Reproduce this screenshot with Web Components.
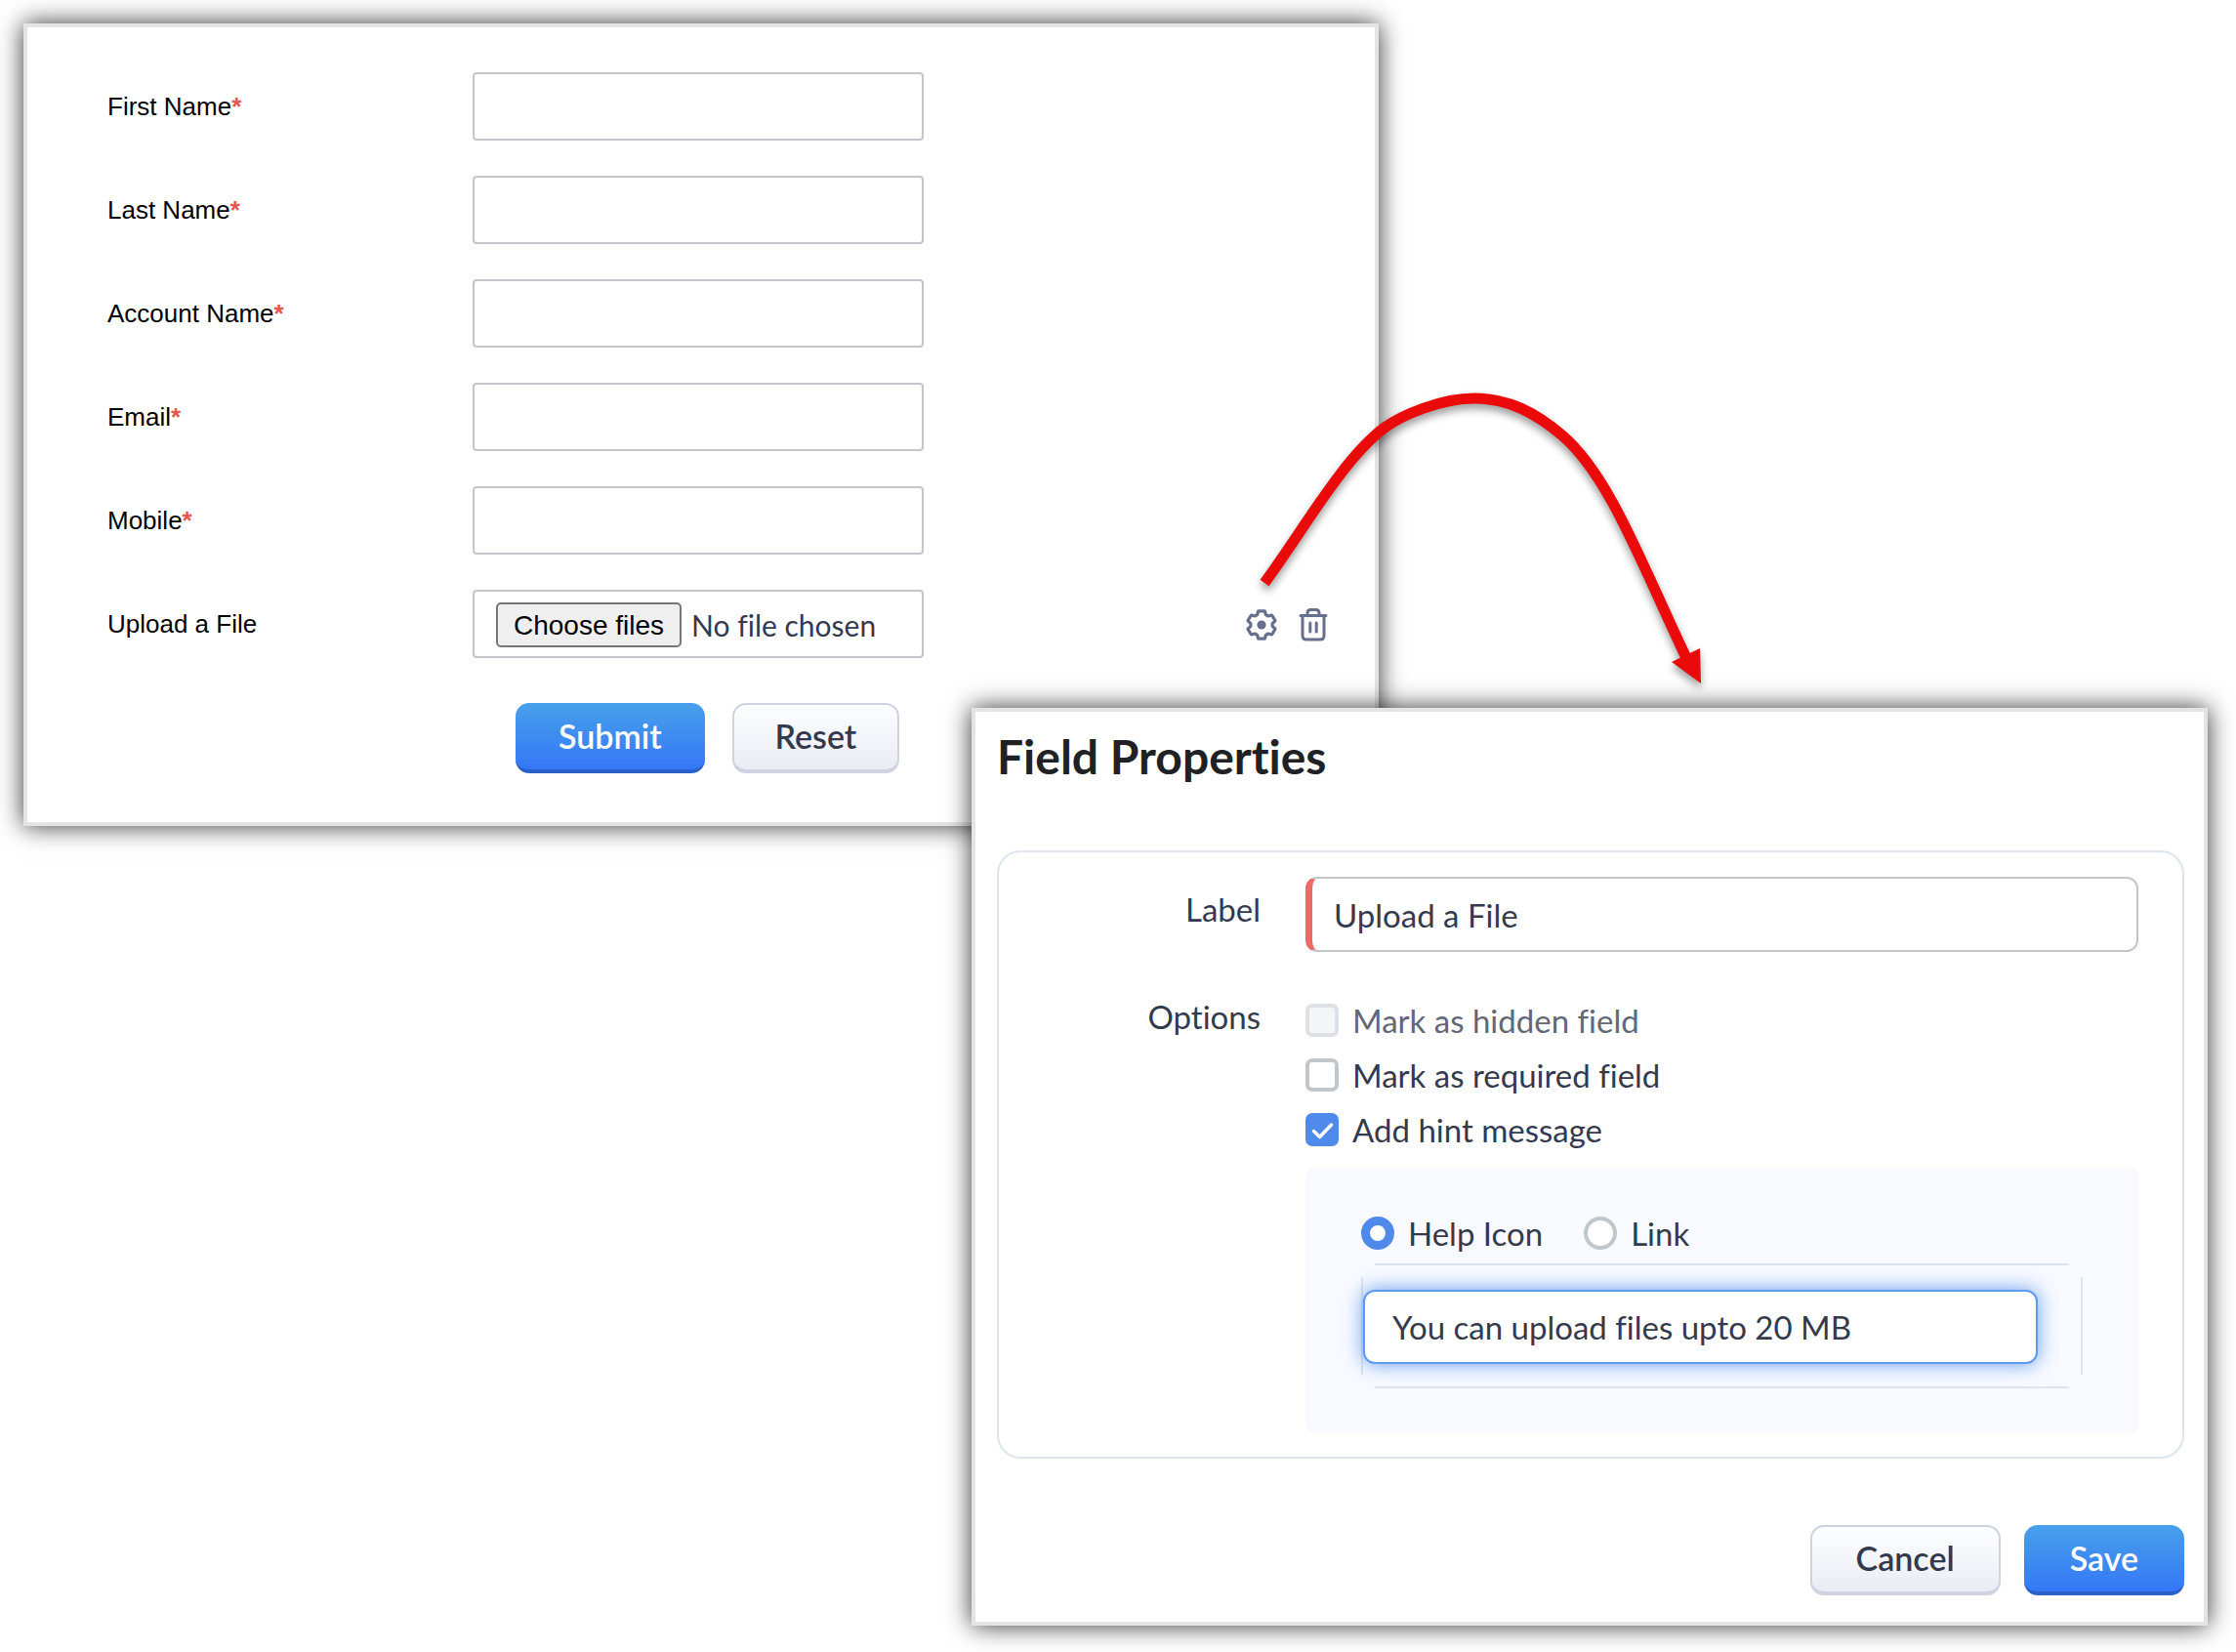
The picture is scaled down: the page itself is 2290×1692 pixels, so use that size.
<!DOCTYPE html>
<html lang="en">
<head>
<meta charset="utf-8">
<meta name="viewport" content="width=device-width, initial-scale=1">
<title>Field Properties</title>
<style>
  body {
    margin: 0;
    background: #fff;
    color: #343a4d;
    font-family: Lato, "Open Sans", sans-serif;
    font-size: 33px;
    font-variant-ligatures: none;
  }
</style>
</head>
<body>
<app-stage>
  <app-panel slot="form">
    <web-form></web-form>
  </app-panel>
  <app-panel slot="properties">
    <field-properties></field-properties>
  </app-panel>
  <callout-arrow slot="arrow"></callout-arrow>
</app-stage>

<script>
class BaseElement extends HTMLElement {
  constructor() {
    super();
    this.attachShadow({ mode: 'open' });
  }

  connectedCallback() {
    this.render();
  }
}

// Two overlapping windows, the second one on top of the first
class AppStage extends BaseElement {
  render() {
    this.shadowRoot.innerHTML = `
      <style>
        :host {
          display: grid;
          position: relative;
          grid-template-columns: 971fr 417fr 849fr;
          grid-template-rows: 701px auto;
          padding: 24px 29px 28px 24px;
        }
        slot[name="form"]::slotted(*) {
          grid-area: 1 / 1 / 3 / 3;
          align-self: start;
        }
        slot[name="properties"]::slotted(*) {
          grid-area: 2 / 2 / 3 / 4;
        }
        slot[name="arrow"]::slotted(*) {
          position: absolute;
          left: 1280px;
          top: 390px;
        }
      </style>
      <slot name="form"></slot>
      <slot name="properties"></slot>
      <slot name="arrow"></slot>
    `;
  }
}

class AppPanel extends BaseElement {
  render() {
    this.shadowRoot.innerHTML = `
      <style>
        :host {
          display: block;
          min-width: 0;
          border: 4px solid #e4e4e4;
          background: #fff;
          box-shadow: 0 0 24px rgba(0, 0, 0, 0.8);
        }
      </style>
      <slot></slot>
    `;
  }
}

class CalloutArrow extends BaseElement {
  render() {
    this.shadowRoot.innerHTML = `
      <style>
        :host {
          display: block;
          pointer-events: none;
        }
        svg {
          display: block;
          filter: drop-shadow(0 5px 4px rgba(0, 0, 0, 0.4));
        }
      </style>
      <svg width="480" height="330" viewBox="1280 390 480 330" aria-hidden="true">
        <path d="M1295 597C1335 543 1375 470 1418 438C1436 425 1476 408 1510 408C1545 408 1573 423 1600 446C1648 487 1680 575 1728 676" fill="none" stroke="#ea0a0a" stroke-width="11"/>
        <path d="M1742 700L1712 678L1741 664Z" fill="#ea0a0a"/>
      </svg>
    `;
  }
}

class AppButton extends BaseElement {
  render() {
    const variant = this.getAttribute('variant') || 'default';
    this.shadowRoot.innerHTML = `
      <style>
        :host {
          display: block;
        }
        button {
          display: block;
          height: 72px;
          padding: 0 calc(var(--button-padding, 44px) - 2px) 2px;
          border: 2px solid #d0d3df;
          border-bottom-width: 4px;
          border-radius: 14px;
          background: linear-gradient(#fdfeff, #e9ecf3);
          color: #343a4d;
          font: 600 34px/1 Lato, "Open Sans", sans-serif;
          cursor: pointer;
        }
        .primary {
          border-width: 0 0 4px;
          border-color: #2a60c8;
          padding: 0 var(--button-padding, 44px);
          background: linear-gradient(#48a0ea, #3577f7);
          color: #fff;
        }
      </style>
      <button type="button" class="${variant}"><slot></slot></button>
    `;
  }
}

class FormField extends BaseElement {
  render() {
    const label = this.getAttribute('label');
    const required = this.hasAttribute('required');
    const isFile = this.getAttribute('type') === 'file';
    this.shadowRoot.innerHTML = `
      <style>
        :host {
          display: grid;
          grid-template-columns: 374px 462px 1fr;
          align-items: center;
        }
        label {
          color: #000;
          font: 26px/32px "Liberation Sans", Arial, sans-serif;
        }
        .required {
          color: #e5564d;
          font-weight: 700;
        }
        .control {
          box-sizing: border-box;
          width: 100%;
          height: 70px;
          border: 2px solid #c1c6cb;
          border-radius: 4px;
          background: #fff;
          padding: 0 22px;
          font: 26px "Liberation Sans", Arial, sans-serif;
        }
        .file {
          display: flex;
          align-items: center;
          gap: 10px;
          padding-top: 2px;
          font: 30px Lato, "Open Sans", sans-serif;
          font-variant-ligatures: none;
        }
        .file button {
          box-sizing: border-box;
          height: 46px;
          padding: 2px 16px 0;
          border: 2px solid #767676;
          border-radius: 5px;
          background: #efefef;
          color: #000;
          font: 28px "Liberation Sans", Arial, sans-serif;
        }
        slot {
          display: flex;
          justify-content: flex-end;
          gap: 21px;
        }
      </style>
      <label for="control">${label}${required ? '<span class="required">*</span>' : ''}</label>
      ${isFile ? `
        <div class="control file">
          <button type="button">Choose files</button>
          <span class="status">No file chosen</span>
          <input type="file" id="control" multiple hidden>
        </div>
      ` : '<input class="control" type="text" id="control">'}
      <slot></slot>
    `;

    if (isFile) {
      const input = this.shadowRoot.querySelector('input');
      this.shadowRoot.querySelector('button').addEventListener('click', () => input.click());
      input.addEventListener('change', () => this.updateStatus(input.files));
    }
  }

  updateStatus(files) {
    const status = this.shadowRoot.querySelector('.status');
    status.textContent = files.length ? `${files.length} files` : 'No file chosen';
  }
}

const ICONS = {
  settings: `
    <g transform="translate(16 18)">
      <path d="M-4.4-10.300L-3.300-14.200H3.300L4.400-10.300L6.700-9L10.600-10L14-4.200L11.100-1.300V1.300L14 4.200L10.600 10L6.700 9L4.400 10.300L3.300 14.200H-3.300L-4.400 10.300L-6.700 9L-10.600 10L-14 4.200L-11.100 1.300V-1.300L-14-4.200L-10.600-10L-6.700-9Z" stroke-width="3.200"/>
      <circle r="4.600" fill="currentColor" stroke="none"/>
    </g>`,
  trash: `
    <path d="M3 8.500h26M10 8V6q0-3.500 3.500-3.500h5Q22 2.500 22 6v2" stroke-width="3"/>
    <path d="M5 9v20q0 4 4 4h14q4 0 4-4V9" stroke-width="3"/>
    <path d="M12.800 16v9M19.200 16v9" stroke-width="3"/>`
};

class IconButton extends BaseElement {
  render() {
    this.shadowRoot.innerHTML = `
      <style>
        :host {
          display: block;
        }
        button {
          display: block;
          padding: 0;
          border: 0;
          background: none;
          color: #66708c;
          cursor: pointer;
        }
        svg {
          display: block;
        }
      </style>
      <button type="button" aria-label="${this.getAttribute('label')}">
        <svg width="32" height="36" viewBox="0 -1 32 36" fill="none" stroke="currentColor" stroke-linecap="round" stroke-linejoin="round">${ICONS[this.getAttribute('icon')]}</svg>
      </button>
    `;
  }
}

class WebForm extends BaseElement {
  constructor() {
    super();
    this.fields = ['First Name', 'Last Name', 'Account Name', 'Email', 'Mobile'];
  }

  render() {
    this.shadowRoot.innerHTML = `
      <style>
        :host {
          display: block;
          padding: 46px 47px 50px 82px;
        }
        form {
          display: grid;
          gap: 36px;
        }
        .actions {
          display: flex;
          gap: 28px;
          padding: 10px 0 0 418px;
        }
      </style>
      <form>
        ${this.fields.map(field => `<form-field label="${field}" required></form-field>`).join('')}
        <form-field label="Upload a File" type="file">
          <icon-button icon="settings" label="Settings"></icon-button>
          <icon-button icon="trash" label="Delete"></icon-button>
        </form-field>
        <div class="actions">
          <app-button variant="primary">Submit</app-button>
          <app-button>Reset</app-button>
        </div>
      </form>
    `;
  }
}

class ChoiceOption extends BaseElement {
  render() {
    const type = this.getAttribute('type') || 'checkbox';
    const flags = ['checked', 'disabled'].filter(name => this.hasAttribute(name)).join(' ');
    this.shadowRoot.innerHTML = `
      <style>
        :host {
          display: block;
        }
        label {
          display: flex;
          align-items: center;
          gap: 14px;
          height: 36px;
          line-height: 36px;
          white-space: nowrap;
        }
        .box {
          display: grid;
          flex: none;
          width: 34px;
          height: 34px;
        }
        .box > * {
          grid-area: 1 / 1;
        }
        input {
          appearance: none;
          box-sizing: border-box;
          width: 34px;
          height: 34px;
          margin: 0;
          border: 4px solid #c1c6cb;
          border-radius: 7px;
          background: #fff;
        }
        input[type="radio"] {
          border-radius: 50%;
        }
        input:checked {
          border-color: #4f8aea;
          background: #4f8aea;
        }
        input[type="radio"]:checked {
          border-width: 9px;
          background: #fff;
        }
        input:disabled {
          border-color: #dde1e6;
          background: #f3f5f7;
        }
        .disabled {
          color: #626776;
        }
        svg {
          display: none;
          z-index: 1;
          pointer-events: none;
        }
        input[type="checkbox"]:checked + svg {
          display: block;
        }
      </style>
      <label class="${flags}">
        <span class="box">
          <input type="${type}" ${flags}>
          <svg width="34" height="34" viewBox="0 0 34 34" fill="none" stroke="#fff" stroke-width="3.500" stroke-linecap="round" stroke-linejoin="round" aria-hidden="true"><path d="M8.500 18.500l6 6L26.500 12"/></svg>
        </span>
        <slot></slot>
      </label>
    `;
  }
}

class HintMessage extends BaseElement {
  render() {
    this.shadowRoot.innerHTML = `
      <style>
        :host {
          display: block;
          padding: 48px 57px 45px;
          border-radius: 6px;
          background: #f8faff;
        }
        .types {
          display: flex;
          gap: 42px;
          margin-bottom: 13px;
        }
        .frame {
          --line: #dde4ee;
          padding: 27px 46px 25px 2px;
          background:
            linear-gradient(var(--line), var(--line)) center top / calc(100% - 28px) 2px,
            linear-gradient(var(--line), var(--line)) center bottom / calc(100% - 28px) 2px,
            linear-gradient(var(--line), var(--line)) left center / 2px calc(100% - 28px),
            linear-gradient(var(--line), var(--line)) right center / 2px calc(100% - 28px);
          background-repeat: no-repeat;
        }
        input {
          display: block;
          box-sizing: border-box;
          width: 100%;
          height: 76px;
          padding: 0 28px;
          border: 2px solid #5f9af0;
          border-radius: 12px;
          outline: none;
          background: #fff;
          box-shadow: 0 0 20px rgba(64, 132, 232, 0.8);
          color: inherit;
          font: inherit;
        }
      </style>
      <div class="types" role="radiogroup" aria-label="Hint type">
        <choice-option type="radio" checked>Help Icon</choice-option>
        <choice-option type="radio">Link</choice-option>
      </div>
      <div class="frame">
        <input type="text" aria-label="Hint message" value="You can upload files upto 20 MB">
      </div>
    `;
  }
}

class FieldProperties extends BaseElement {
  render() {
    this.shadowRoot.innerHTML = `
      <style>
        :host {
          display: block;
          padding: 18px 20px 27px 22px;
        }
        h2 {
          margin: 0 0 68px;
          color: #202124;
          font-size: 48px;
          line-height: 56px;
          font-weight: 700;
        }
        .card {
          display: grid;
          grid-template-columns: 268px 1fr;
          gap: 52px 46px;
          padding: 25px 45px 25px 0;
          border: 2px solid #dde5ef;
          border-radius: 24px;
        }
        .name {
          text-align: right;
          line-height: 66px;
        }
        #options {
          line-height: 28px;
        }
        #label {
          box-sizing: border-box;
          width: 100%;
          height: 77px;
          padding: 0 22px;
          border: 2px solid #c1c6cb;
          border-left: 7px solid #ee6a64;
          border-radius: 12px;
          background: #fff;
          color: inherit;
          font: inherit;
        }
        .options {
          display: grid;
          gap: 20px;
        }
        hint-message {
          margin-top: 2px;
        }
        .footer {
          --button-padding: 47px;
          display: flex;
          justify-content: flex-end;
          gap: 24px;
          margin-top: 68px;
        }
      </style>
      <h2>Field Properties</h2>
      <div class="card">
        <label class="name" for="label">Label</label>
        <input type="text" id="label" value="Upload a File">
        <span class="name" id="options">Options</span>
        <div class="options" role="group" aria-labelledby="options">
          <choice-option disabled>Mark as hidden field</choice-option>
          <choice-option>Mark as required field</choice-option>
          <choice-option checked>Add hint message</choice-option>
          <hint-message></hint-message>
        </div>
      </div>
      <div class="footer">
        <app-button>Cancel</app-button>
        <app-button variant="primary">Save</app-button>
      </div>
    `;
  }
}

customElements.define('app-stage', AppStage);
customElements.define('app-panel', AppPanel);
customElements.define('callout-arrow', CalloutArrow);
customElements.define('app-button', AppButton);
customElements.define('form-field', FormField);
customElements.define('icon-button', IconButton);
customElements.define('web-form', WebForm);
customElements.define('choice-option', ChoiceOption);
customElements.define('hint-message', HintMessage);
customElements.define('field-properties', FieldProperties);
</script>
</body>
</html>
